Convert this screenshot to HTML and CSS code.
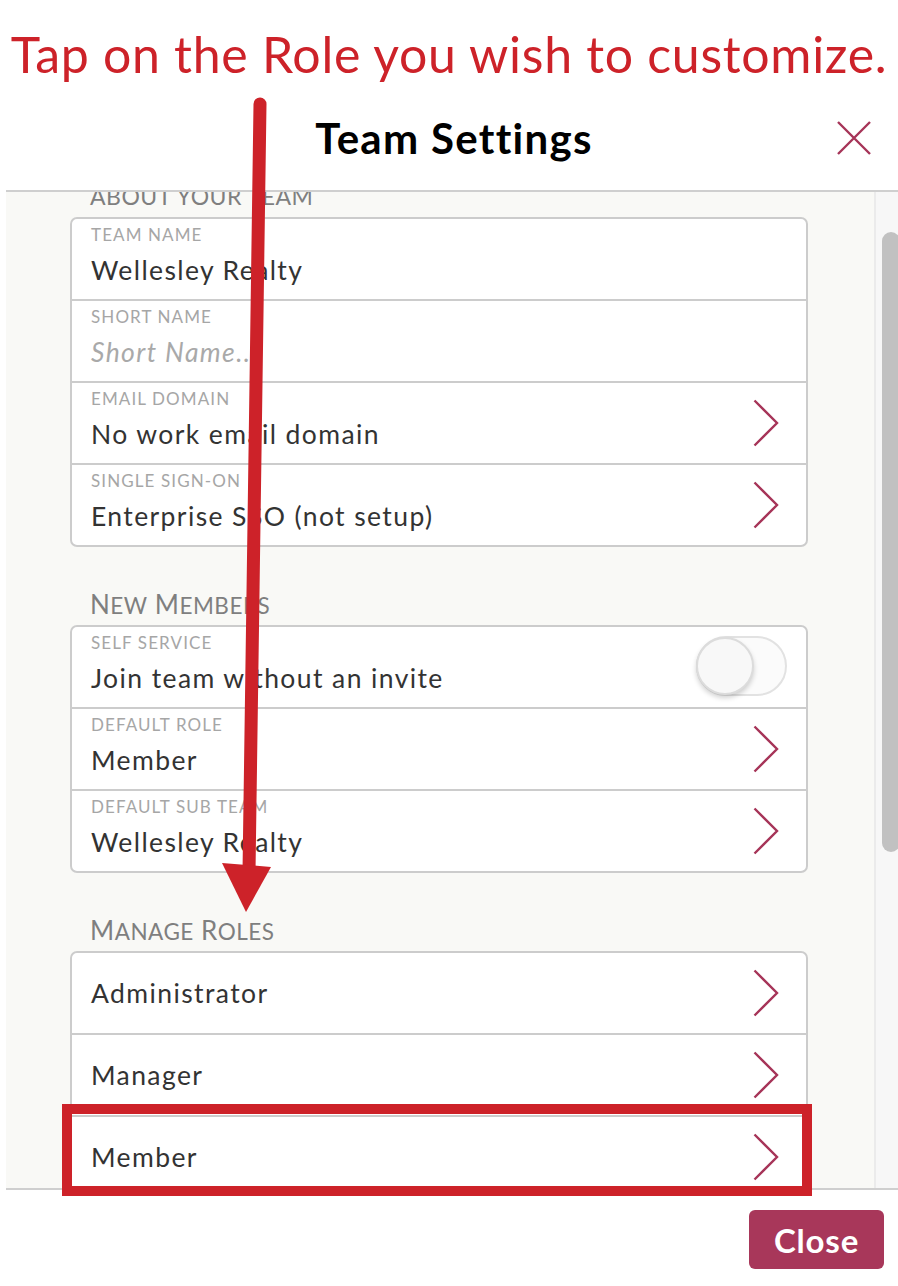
FILE: index.html
```html
<!DOCTYPE html>
<html lang="en">
<head>
<meta charset="utf-8">
<title>Team Settings</title>
<link rel="stylesheet" href="styles.css">
</head>
<body>
<div class="page">
  <p class="hint">Tap on the Role you wish to customize.</p>

  <header class="modal-header">
    <span class="spacer"></span>
    <h1 class="title">Team Settings</h1>
    <button class="close-x" aria-label="Close">
      <svg width="34" height="34" viewBox="0 0 34 34"><path d="M1 1 L33 33 M33 1 L1 33" stroke="#a63458" stroke-width="2.4" fill="none"/></svg>
    </button>
  </header>

  <div class="scroll-area">
    <div class="scroll-content">
      <h2 class="section-title first">ABOUT YOUR TEAM</h2>
      <div class="card">
        <div class="row">
          <div class="row-text">
            <span class="label">TEAM NAME</span>
            <span class="value">Wellesley Realty</span>
          </div>
        </div>
        <div class="row">
          <div class="row-text">
            <span class="label">SHORT NAME</span>
            <span class="value placeholder">Short Name...</span>
          </div>
        </div>
        <div class="row">
          <div class="row-text">
            <span class="label">EMAIL DOMAIN</span>
            <span class="value">No work email domain</span>
          </div>
          <svg class="chev" width="26" height="48" viewBox="0 0 26 48"><polyline points="1.5,1.5 24,24 1.5,46.5" fill="none" stroke="#a63458" stroke-width="2.4"/></svg>
        </div>
        <div class="row">
          <div class="row-text">
            <span class="label">SINGLE SIGN-ON</span>
            <span class="value">Enterprise SSO (not setup)</span>
          </div>
          <svg class="chev" width="26" height="48" viewBox="0 0 26 48"><polyline points="1.5,1.5 24,24 1.5,46.5" fill="none" stroke="#a63458" stroke-width="2.4"/></svg>
        </div>
      </div>

      <h2 class="section-title">N<span class="sc">EW</span> M<span class="sc">EMBERS</span></h2>
      <div class="card">
        <div class="row">
          <div class="row-text">
            <span class="label">SELF SERVICE</span>
            <span class="value">Join team without an invite</span>
          </div>
          <div class="toggle"><span class="knob"></span></div>
        </div>
        <div class="row">
          <div class="row-text">
            <span class="label">DEFAULT ROLE</span>
            <span class="value">Member</span>
          </div>
          <svg class="chev" width="26" height="48" viewBox="0 0 26 48"><polyline points="1.5,1.5 24,24 1.5,46.5" fill="none" stroke="#a63458" stroke-width="2.4"/></svg>
        </div>
        <div class="row">
          <div class="row-text">
            <span class="label">DEFAULT SUB TEAM</span>
            <span class="value">Wellesley Realty</span>
          </div>
          <svg class="chev" width="26" height="48" viewBox="0 0 26 48"><polyline points="1.5,1.5 24,24 1.5,46.5" fill="none" stroke="#a63458" stroke-width="2.4"/></svg>
        </div>
      </div>

      <h2 class="section-title">M<span class="sc">ANAGE</span> R<span class="sc">OLES</span></h2>
      <div class="card">
        <div class="row single">
          <span class="value">Administrator</span>
          <svg class="chev" width="26" height="48" viewBox="0 0 26 48"><polyline points="1.5,1.5 24,24 1.5,46.5" fill="none" stroke="#a63458" stroke-width="2.4"/></svg>
        </div>
        <div class="row single">
          <span class="value">Manager</span>
          <svg class="chev" width="26" height="48" viewBox="0 0 26 48"><polyline points="1.5,1.5 24,24 1.5,46.5" fill="none" stroke="#a63458" stroke-width="2.4"/></svg>
        </div>
        <div class="row single">
          <span class="value">Member</span>
          <svg class="chev" width="26" height="48" viewBox="0 0 26 48"><polyline points="1.5,1.5 24,24 1.5,46.5" fill="none" stroke="#a63458" stroke-width="2.4"/></svg>
        </div>
      </div>
    </div>
    <div class="scrollbar"><div class="thumb"></div></div>
  </div>

  <footer class="modal-footer">
    <button class="close-btn">Close</button>
  </footer>

  <div class="highlight-box"></div>
  <svg class="annot-arrow" width="898" height="1286" viewBox="0 0 898 1286">
    <line x1="260" y1="104" x2="249" y2="872" stroke="#cd2229" stroke-width="13" stroke-linecap="round"/>
    <polygon points="222,863 271,867 246,912" fill="#cd2229"/>
  </svg>
</div>
</body>
</html>
```

FILE: styles.css
```css
* { box-sizing: border-box; }

html, body {
  margin: 0;
  padding: 0;
  background: #ffffff;
}

body {
  font-family: "Lato", "Liberation Sans", sans-serif;
  color: #333333;
}

.page {
  position: relative;
  width: 898px;
  height: 1286px;
  overflow: hidden;
  display: flex;
  flex-direction: column;
}

.hint {
  margin: 0;
  padding-top: 24px;
  height: 83px;
  font-size: 50px;
  line-height: 60px;
  color: #cd2229;
  letter-spacing: 0.7px;
  text-align: center;
  white-space: nowrap;
}

.modal-header {
  height: 107px;
  margin-left: 6px;
  padding-left: 4px;
  display: grid;
  grid-template-columns: 1fr auto 1fr;
  align-items: center;
}

.title {
  margin: 2px 0 0;
  font-size: 42px;
  line-height: 48px;
  font-weight: 700;
  letter-spacing: 1.3px;
  color: #000000;
}

.close-x {
  justify-self: end;
  margin-right: 27px;
  margin-top: 2px;
  padding: 0;
  border: 0;
  background: none;
  width: 34px;
  height: 34px;
  display: flex;
}

.scroll-area {
  height: 1000px;
  margin-left: 6px;
  border-top: 2px solid #cfcfcf;
  border-bottom: 2px solid #cfcfcf;
  background: #f9f9f6;
  display: flex;
  overflow: hidden;
}

.scroll-content {
  flex: 1;
  padding: 0 66px 0 64px;
  margin-top: -13px;
}

.section-title {
  margin: 42px 0 0;
  height: 36px;
  padding: 0 0 6px 20px;
  font-size: 26px;
  line-height: 30px;
  font-weight: 400;
  color: #7f7f7f;
  letter-spacing: 0.5px;
  white-space: nowrap;
}

.section-title.first {
  margin-top: 2px;
  font-size: 23px;
}

.section-title .sc {
  font-size: 22.5px;
  line-height: 1;
}

.card {
  background: #ffffff;
  border: 2px solid #cccccc;
  border-radius: 7px;
}

.row {
  height: 82px;
  padding: 0 19px;
  border-top: 2px solid #cccccc;
  display: flex;
  align-items: center;
  justify-content: space-between;
}

.row:first-child {
  height: 80px;
  border-top: 0;
}

.row-text {
  align-self: flex-start;
  display: flex;
  flex-direction: column;
  padding-top: 6px;
}

.label {
  font-size: 17px;
  line-height: 20px;
  color: #a6a6a6;
  letter-spacing: 1.1px;
}

.value {
  margin-top: 8px;
  font-size: 26.5px;
  line-height: 34px;
  color: #333333;
  letter-spacing: 1.4px;
}

.row.single .value {
  margin-top: 0;
}

.value.placeholder {
  font-style: italic;
  color: #a9a9a9;
}

.chev {
  margin-right: 8px;
  flex: none;
}

.toggle {
  width: 91px;
  height: 60px;
  border: 2px solid #e2e2e2;
  border-radius: 30px;
  background: #fbfbfb;
  display: flex;
  align-items: center;
  margin-top: -2px;
}

.knob {
  width: 58px;
  height: 58px;
  margin-left: -2px;
  border-radius: 50%;
  background: #f8f8f8;
  border: 2px solid #dcdcdc;
  box-shadow: 0 3px 5px rgba(0, 0, 0, 0.18);
}

.scrollbar {
  width: 24px;
  flex: none;
  border-left: 2px solid #ebebeb;
  background: #f7f7f7;
  padding-top: 40px;
  padding-left: 6px;
}

.thumb {
  width: 18px;
  height: 620px;
  border-radius: 9px;
  background: #c1c1c1;
}

.modal-footer {
  flex: 1;
  display: flex;
  justify-content: flex-end;
  align-items: flex-start;
  padding: 20px 14px 0 0;
}

.close-btn {
  width: 135px;
  height: 59px;
  border: 0;
  border-radius: 6px;
  background: #a8375a;
  color: #ffffff;
  font-family: "Lato", "Liberation Sans", sans-serif;
  font-size: 33px;
  font-weight: 700;
  letter-spacing: 0.8px;
  padding: 0;
}

.highlight-box {
  position: absolute;
  left: 62px;
  top: 1104px;
  width: 750px;
  height: 92px;
  border: 10px solid #cd2229;
  pointer-events: none;
}

.annot-arrow {
  position: absolute;
  left: 0;
  top: 0;
  pointer-events: none;
}
```
